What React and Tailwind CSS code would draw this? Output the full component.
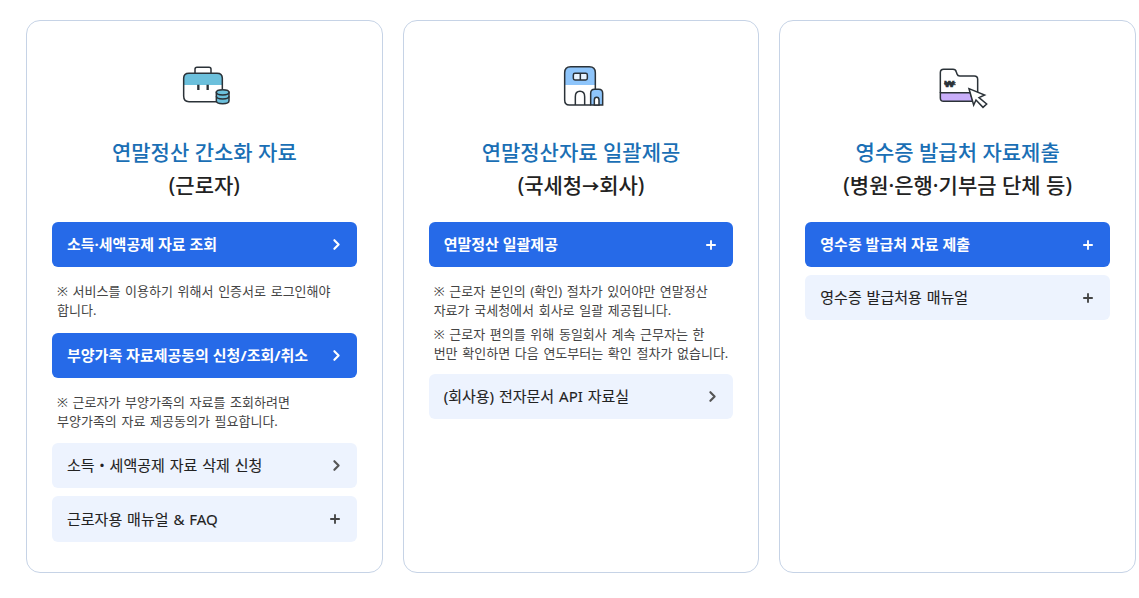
import React from "react";
import { ChevronRight, Plus } from "lucide-react";

const BriefcaseIcon = () => (
  <svg width="90" height="70" viewBox="-2 0 270 210" fill="none" stroke="#2b3238" strokeWidth="4.5">
    <path d="M106 70V58Q106 52 112 52H148Q154 52 154 58V70" />
    <path d="M72 105V85Q72 70 88 70H172Q188 70 188 85V105Z" fill="#6cc0dc" stroke="none" />
    <path d="M72 105V85Q72 70 88 70H172Q188 70 188 85V118" />
    <path d="M72 105V138Q72 155 88 155H170" />
    <path d="M116 104V120M144 104V120" strokeWidth="7" />
    <path d="M170 127V152Q170 161 189 161T208 152V127Z" fill="#6cc0dc" />
    <ellipse cx="189" cy="127" rx="19" ry="8" fill="#6cc0dc" />
    <path d="M170 139Q170 147 189 147T208 139" />
  </svg>
);

const BuildingIcon = () => (
  <svg width="90" height="70" viewBox="-12 0 270 210" fill="none" stroke="#2b3238" strokeWidth="4.5">
    <path d="M74 105V68Q74 50 92 50H148Q166 50 166 68V105Z" fill="#8ec5fb" stroke="none" />
    <path d="M152 165H88Q74 165 74 150V68Q74 50 92 50H148Q166 50 166 68V118" />
    <rect x="100" y="70" width="42" height="20" rx="5" fill="#e8f3fe" />
    <path d="M121 70V90" />
    <path d="M106 165V140Q106 124 120 124T134 140V165" />
    <path d="M152 165V130Q152 118 164 118H176Q188 118 188 130V165Z" fill="#8ec5fb" />
    <path d="M163 165V150Q163 142 170 142T177 150V165Z" fill="#ffffff" />
  </svg>
);

const FolderIcon = () => (
  <svg width="90" height="70" viewBox="-22 0 270 210" fill="none" stroke="#2b3238" strokeWidth="4.5">
    <path d="M60 128H150L158 154H70Q60 154 60 144Z" fill="#c9aefa" />
    <path d="M60 128V68Q60 58 70 58H98Q106 58 108 66L110 72Q112 78 118 78H162Q172 78 172 88V128" />
    <text transform="translate(72 111) scale(1.3 0.85)" fontSize="32" fontWeight="700" fill="#2b3238" stroke="#2b3238" strokeWidth="1.5">₩</text>
    <path d="M72 98H106M72 104H106" strokeWidth="3" />
    <path d="M146 116L193 135L176 143L199 162L188 172L167 150L160 165Z" fill="#ffffff" />
  </svg>
);

const Btn = ({ label, primary, icon, tall }) => (
  <div
    className={`flex items-center justify-between ${tall ? "h-[46px]" : "h-[45px]"} rounded-[6px] pl-[15px] pr-[12px] text-[15px] ${
      primary
        ? "bg-[#266ae8] text-white font-bold"
        : "bg-[#edf3fe] text-[#222222] font-normal [word-spacing:1px] [-webkit-text-stroke:0.1px]"
    }`}
  >
    <span className="whitespace-nowrap">{label}</span>
    {icon === "plus" ? (
      <Plus size={14} strokeWidth={3.2} className={primary ? "mr-[3px]" : "mr-[3px] text-[#444444]"} />
    ) : (
      <ChevronRight size={17} strokeWidth={3} className={primary ? "" : "text-[#555555]"} />
    )}
  </div>
);

const Note = ({ lines }) => (
  <p className="pl-[5px] text-[13px] leading-[18.5px] text-[#444444] whitespace-nowrap [word-spacing:1.3px]">
    {lines.map((line, i) => (
      <span key={i} className="block">{line}</span>
    ))}
  </p>
);

const Card = ({ icon, title, sub, children }) => (
  <section className="w-[356.67px] h-[553px] shrink-0 rounded-[14px] border border-[#c6d3e6] bg-white px-[25px]">
    <div className="h-[70px] mt-[29px] flex justify-center">{icon}</div>
    <h2 className="mt-[16px] text-center text-[21px] leading-[33px] font-medium text-[#1a6fb5] whitespace-nowrap">{title}</h2>
    <h3 className="h-[33px] text-center text-[21px] leading-[33px] font-medium text-[#222222] whitespace-nowrap">{sub}</h3>
    <div className="mt-[20px] flex flex-col">{children}</div>
  </section>
);

export default function App() {
  return (
    <div className="font-['Noto_Sans','Noto_Sans_CJK_KR',sans-serif] flex gap-[20px] pl-[26px] pt-[20px] pb-[25px] w-[1139px] h-[598px] overflow-hidden bg-white">
      <Card icon={<BriefcaseIcon />} title="연말정산 간소화 자료" sub="(근로자)">
        <Btn primary label="소득·세액공제 자료 조회" />
        <div className="mt-[15px] mb-[14px]">
          <Note lines={["※ 서비스를 이용하기 위해서 인증서로 로그인해야", "합니다."]} />
        </div>
        <Btn primary label="부양가족 자료제공동의 신청/조회/취소" />
        <div className="mt-[15px] mb-[13px]">
          <Note lines={["※ 근로자가 부양가족의 자료를 조회하려면", "부양가족의 자료 제공동의가 필요합니다."]} />
        </div>
        <Btn label="소득・세액공제 자료 삭제 신청" />
        <div className="mt-[8px]">
          <Btn tall label="근로자용 매뉴얼 & FAQ" icon="plus" />
        </div>
      </Card>
      <Card
        icon={<BuildingIcon />}
        title="연말정산자료 일괄제공"
        sub={<>(국세청<span className="text-[17px] font-bold">→</span>회사)</>}
      >
        <Btn primary label="연말정산 일괄제공" icon="plus" />
        <div className="mt-[15px] mb-[12px] flex flex-col gap-[6px]">
          <Note lines={["※ 근로자 본인의 (확인) 절차가 있어야만 연말정산", "자료가 국세청에서 회사로 일괄 제공됩니다."]} />
          <Note lines={["※ 근로자 편의를 위해 동일회사 계속 근무자는 한", "번만 확인하면 다음 연도부터는 확인 절차가 없습니다."]} />
        </div>
        <Btn label="(회사용) 전자문서 API 자료실" />
      </Card>
      <Card icon={<FolderIcon />} title="영수증 발급처 자료제출" sub="(병원·은행·기부금 단체 등)">
        <Btn primary label="영수증 발급처 자료 제출" icon="plus" />
        <div className="mt-[8px]">
          <Btn label="영수증 발급처용 매뉴얼" icon="plus" />
        </div>
      </Card>
    </div>
  );
}
